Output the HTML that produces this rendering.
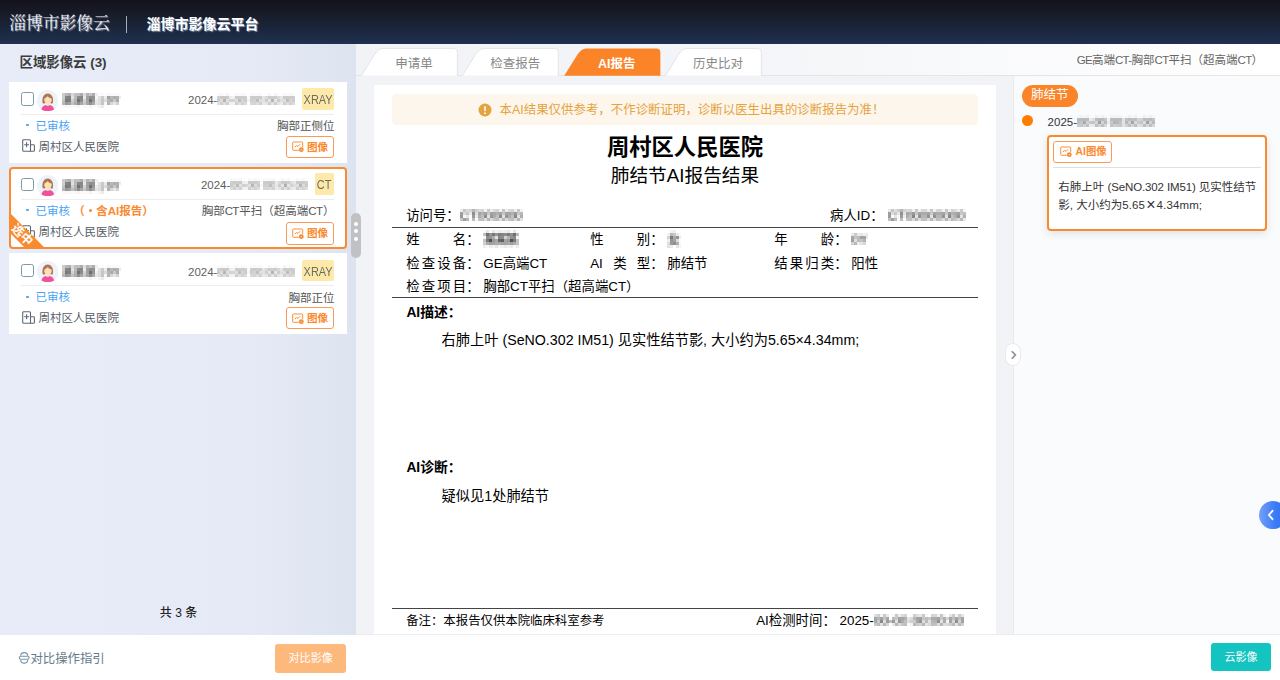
<!DOCTYPE html>
<html lang="zh-CN">
<head>
<meta charset="utf-8">
<title>淄博市影像云平台</title>
<style>
*{box-sizing:border-box;margin:0;padding:0}
html,body{width:1280px;height:680px;overflow:hidden;background:#fff}
body{font-family:"Liberation Sans","Noto Sans CJK SC",sans-serif;font-size:12px;color:#333;position:relative}
.a{position:absolute;white-space:nowrap}
.blur{filter:url(#px);white-space:nowrap;display:inline-block}
.nm .blur{font-weight:bold;color:#484848}
/* header */
#hdr{position:absolute;left:0;top:0;width:1280px;height:44px;background:linear-gradient(180deg,#14121a 0%,#19202f 45%,#1f3051 100%)}
#hdr .t1{position:absolute;left:9.2px;top:12px;font-family:"Liberation Serif","Noto Serif CJK SC",serif;font-size:16.8px;line-height:24px;color:#f4f4f7;text-shadow:1px 1px 1px rgba(170,175,190,.8)}
#hdr .sep{position:absolute;left:125.9px;top:16px;width:1px;height:17px;background:#a8adb8}
#hdr .t2{position:absolute;left:146.4px;top:12.6px;font-size:14px;line-height:22px;font-weight:bold;color:#fff;text-shadow:1px 1px 1px rgba(160,170,190,.9)}
/* left */
#left{position:absolute;left:0;top:44px;width:356px;height:591px;z-index:2;background:linear-gradient(90deg,#e7ecf8 0%,#e5eaf6 70%,#dde3ef 100%)}
#left h3{position:absolute;left:19.5px;top:9px;font-size:13.4px;line-height:20px;font-weight:bold;color:#3c3c3c}
.card{position:absolute;left:9px;width:338px;height:81px;background:#fff;font-size:11.5px}
.card.sel{border:2px solid #fa8a2f;border-radius:4px;overflow:hidden;height:81.6px}
.card .in{position:absolute;left:0;top:0;width:338px;height:81px}
.card.sel .in{left:-2px;top:-1.5px}
.card.c3 .in{top:.7px}
.card.sel .hr{top:31.3px}
.card.sel .st{top:34px}
.card.sel .ex{top:34.5px}
.card.sel .cb{top:10.6px;height:13px}
.card.c3 .hr{top:31.3px}
.cb{position:absolute;left:12px;top:10.3px;width:13px;height:13.3px;border:1px solid #7d98a8;border-radius:2.5px;background:#fff}
.av{position:absolute;left:27.7px;top:7.6px;width:21.5px;height:21.5px}
.nm{position:absolute;left:53px;top:8px;line-height:21px;font-size:11.5px;font-weight:bold;color:#333}
.dt .blur{filter:url(#px);white-space:nowrap;display:inline-block}
.nm .blur{font-weight:bold;color:#484848}
.dt{position:absolute;left:179px;top:8px;line-height:21px;font-size:11.5px;color:#5e5e5e}
.tag{position:absolute;right:13px;top:6px;height:21.5px;line-height:24px;width:32.2px;text-align:center;background:#fde9a9;color:#6e6d62;border-radius:2px;font-size:12.2px;overflow:hidden}
.tag span{display:inline-block;transform:scaleX(.9);transform-origin:50% 50%;margin:0 -4px}
.tag.ct{width:19.3px}
.hr{position:absolute;left:12px;right:13px;top:32px;height:1px;background:#ededf0}
.st{position:absolute;left:26.5px;top:34.7px;line-height:18px;color:#4aa3f5;font-size:11.5px}
.st b{color:#fa8a2f}
.st i{position:absolute;left:-9.6px;top:7.2px;width:2.6px;height:2.6px;border-radius:50%;background:#4aa3f5}
.st b i{position:relative;left:0;top:0;display:inline-block;vertical-align:middle;background:none;width:11.5px;height:3px;margin-top:-2px}
.st b i:after{content:"";position:absolute;left:4.2px;top:0;width:3px;height:3px;border-radius:50%;background:#fa8a2f}
.rib{position:absolute;left:-16.7px;top:60px;width:60px;height:14px;background:#fa8a2f;transform:rotate(45deg)}
.ribt{position:absolute;left:-17.2px;top:60.3px;width:60px;height:14px;text-align:center;color:#fff;font-size:12.3px;font-weight:bold;line-height:14px;transform:rotate(45deg);white-space:nowrap}
.ex u{text-decoration:none;letter-spacing:-.65px;margin-right:.65px}
.sel .ib{top:54.4px;height:23px;line-height:21px}
.sel .ib svg{top:5px}
.sel .tag{top:5.7px}
.sel .dt{top:7.5px}
.ex{position:absolute;right:12.5px;top:35px;line-height:18px;color:#555;font-size:11.5px}
.hs{position:absolute;left:29.5px;top:55.8px;line-height:18px;color:#555c68;font-size:11.5px}
.hi{position:absolute;left:13px;top:57px;width:13px;height:13px}
.ib{position:absolute;right:12.9px;top:53.7px;width:48.6px;height:22.1px;border:1px solid #fb9a58;border-radius:3px;background:#fff;color:#fa8a2f;font-weight:bold;font-size:10.6px;line-height:20px}
.ib svg{position:absolute;left:5px;top:4.5px;width:13px;height:12px}
.ib span{position:absolute;left:20.5px;top:0}
#total{position:absolute;left:0;top:559.4px;width:357px;text-align:center;font-size:12px;line-height:20px;color:#222;font-weight:500}
#grip{position:absolute;left:351px;top:213px;width:9.5px;height:45px;border-radius:5px;background:#c1c1c5;z-index:3}
#grip i{position:absolute;left:2.7px;width:4px;height:4px;border-radius:50%;background:#fff}
/* bottom */
#bot{position:absolute;left:0;top:634.3px;width:1280px;height:46px;background:#fff;border-top:1px solid #ececf0}
#bot .g{position:absolute;left:30.4px;top:14px;line-height:20px;font-size:12.4px;color:#64798a}
#bot .b1{position:absolute;left:275.2px;top:9.2px;width:71px;height:28.5px;border-radius:3px;background:#fdb87c;color:#fff;font-size:11.1px;line-height:28.5px;text-align:center}
#bot .b2{position:absolute;left:1211px;top:7.6px;width:60px;height:28.4px;border-radius:3px;background:#14c4c0;color:#fff;font-size:11px;line-height:28.4px;text-align:center}
/* center */
#mid{position:absolute;left:356px;top:44px;width:924px;height:590px;background:#f2f3f7}
#topbar{position:absolute;left:0;top:0;width:924px;height:32px;background:linear-gradient(90deg,#f2f3f7 0%,#f4f5f8 40%,#fff 100%);border-bottom:1px solid #e3e5ea}
#topbar .ttl u{text-decoration:none;letter-spacing:-.67px}
#topbar .ttl{position:absolute;right:17px;top:5.6px;line-height:20px;font-size:11.5px;color:#666}
.tab{position:absolute;top:4px;height:28px;width:101px}
.tab svg{position:absolute;left:0;top:0}
.tab span{position:absolute;left:15px;width:76px;top:5.8px;text-align:center;line-height:20px;font-size:12.5px;color:#888}
.tab.on span{color:#fff;font-weight:bold}
#rep{position:absolute;left:18px;top:41px;width:621.7px;height:549px;background:#fff;color:#000;font-size:14px}
#rp{position:absolute;left:657px;top:32px;width:267px;height:558px;background:#fafbfd;border-left:1px solid #e9eaf0}
#rp .w{position:absolute;left:1px;top:0;width:0;height:0}

.alert{position:absolute;left:18px;top:9px;width:586px;height:30.5px;border-radius:4px;background:#fdf6ec;color:#e6a23c;font-size:12.45px;line-height:30.5px;white-space:nowrap}
.alert svg{position:absolute;left:86.200px;top:9px}
.alert span{position:absolute;left:107.500px;top:.7px}
.h1{position:absolute;left:18px;width:586px;top:48.1px;text-align:center;font-size:22.3px;font-weight:bold;line-height:30px;color:#000}
.h2{position:absolute;left:18px;width:586px;top:78px;text-align:center;font-size:18.7px;line-height:26px;color:#000}
.r{font-size:13.400px;line-height:20px;color:#000}
.lb{display:inline-block;width:60px;text-align:justify;text-align-last:justify;vertical-align:top}
.lb.fx{display:inline-flex;justify-content:space-between}
.ln{position:absolute;left:18px;width:586px;height:1px;background:#444}
.bt{font-size:13.8px;font-weight:bold;line-height:22px;color:#000}
.bd{font-size:14.22px;line-height:22px;color:#000}
.ft{font-size:12.400px;line-height:20px;color:#000}
.v{vertical-align:top}

.pill{position:absolute;left:7.100px;top:9.300px;width:55.500px;height:21.500px;border-radius:11px;background:#fb8429;color:#fff;font-size:12.500px;line-height:21.500px;text-align:center}
.dot{position:absolute;left:6.600px;top:38.900px;width:11px;height:11px;border-radius:50%;background:#ff7d00}
.tm{left:32.600px;top:36.300px;font-size:11.500px;line-height:20px;color:#333}
.rc{position:absolute;left:32.100px;top:59.200px;width:220px;height:95.500px;border:2px solid #fa8a2f;border-radius:4px;background:#fff;box-shadow:0 3px 8px rgba(0,0,0,.1)}
.aib{position:absolute;left:4px;top:4px;width:59px;height:21.500px;border:1px solid #fb9a58;border-radius:3px;color:#fa8a2f;font-weight:bold;font-size:10.4px;line-height:19.500px}
.aib svg{position:absolute;left:6px;top:4.200px;width:13px;height:12px}
.aib span{position:absolute;left:21.500px;top:0}
.rhr{position:absolute;left:4px;right:4.500px;top:29.800px;height:1px;background:#e0e0e3}
.rt{position:absolute;left:9.200px;font-size:11.500px;line-height:18px;color:#333;white-space:nowrap}
.rt u{text-decoration:none;letter-spacing:-.13px}
.rt i{font-style:normal;margin:0 1.1px;font-size:16px;line-height:0;position:relative;top:1.2px}
.rt s{text-decoration:none;letter-spacing:.12px}
.col{position:absolute;left:-10.2px;top:267.4px;width:16.6px;height:23px;border-radius:8.3px;background:#fff;border:1px solid #e9e9ef}
.col svg{position:absolute;left:4.3px;top:5.3px}
.fab{position:absolute;left:243.600px;top:424.500px;width:28px;height:28px;border-radius:14px;background:linear-gradient(90deg,#74a0f8 0%,#3a7af6 60%,#2f73f5 100%)}
.fab svg{position:absolute;left:7.500px;top:7.500px}
.gi{position:absolute;left:17.9px;top:15.9px}
</style>
</head>
<body>
<svg width="0" height="0" style="position:absolute"><defs><filter id="px" x="0" y="0" width="100%" height="100%" color-interpolation-filters="sRGB"><feGaussianBlur in="SourceGraphic" stdDeviation="0.9" result="b"/><feFlood x="1" y="1" width="1" height="1" flood-color="#000"/><feComposite width="3" height="3"/><feTile result="t"/><feComposite in="b" in2="t" operator="in"/><feMorphology operator="dilate" radius="1" result="m"/><feGaussianBlur in="m" stdDeviation=".6"/></filter></defs></svg>
<div id="hdr"><div class="t1">淄博市影像云</div><div class="sep"></div><div class="t2">淄博市影像云平台</div></div>
<div id="left"><h3>区域影像云 (3)</h3>
<div class="card" style="top:38px"><div class="in">
<div class="cb"></div>
<svg class="av" viewBox="0 0 43 43"><circle cx="21.500" cy="21.500" r="21.500" fill="#eef2fa"/><path d="M11.500 26.500c-1.200-4-1-9.500 1-13.500 1.800-4 5.500-6 9-6s7.200 2 9 6c2 4 2.200 9.500 1 13.500-2 .8-4.300 .5-5.800-.5h-8.400c-1.500 1-3.800 1.300-5.800 .5z" fill="#b4744c"/><path d="M14.500 17.500c2-1 4.800-2.800 6.500-5 2.300 2.300 5.200 4 8.500 5 .3 4.800-1.800 8.800-5 10.300v3.200h-5v-3.200c-3.200-1.500-5.300-5.500-5-10.300z" fill="#fbe0bc"/><path d="M9 39.500c0-4.800 4-8.300 9-9.300 1 1.300 2.500 1.800 3.500 1.800s2.500-.5 3.500-1.800c5 1 9 4.500 9 9.300-3.500 1.700-7.500 2.500-12.500 2.500s-9-.8-12.500-2.500z" fill="#f1519b"/></svg>
<div class="nm"><span class="blur">某某某 | 0Y</span></div>
<div class="dt">2024-<span class="blur">00-00 00:00:00</span></div>
<div class="tag"><span>XRAY</span></div>
<div class="hr"></div>
<div class="st"><i></i>已审核</div>
<div class="ex">胸部正侧位</div>
<svg class="hi" viewBox="0 0 13 13" fill="none" stroke="#5f6878" stroke-width="1.100"><path d="M8.500 12.300H1.700a1 1 0 0 1-1-1V1.700a1 1 0 0 1 1-1h5.800a1 1 0 0 1 1 1z"/><path d="M8.500 5.800h3a.9.900 0 0 1 .9.900v4.700a.9.900 0 0 1-.9.900h-3"/><path d="M4.600 3.200v5M2.200 5.700h4.800"/></svg>
<div class="hs">周村区人民医院</div>
<div class="ib"><svg viewBox="0 0 13 12" fill="none" stroke="#fa8a2f" stroke-width=".95"><path d="M6.800 9.300H1.500a.8.800 0 0 1-.8-.8V1.800a.8.800 0 0 1 .8-.8h8.400a.8.800 0 0 1 .8.800v4.400"/><path d="M2.800 6.200l1.700-1.700 1.500 .9 2.200-2.200" stroke-width="1"/><circle cx="9.300" cy="8.700" r="2.400" fill="#fa8a2f" stroke="none"/><circle cx="9.300" cy="8.700" r=".8" fill="#fff" stroke="none" opacity=".55"/></svg><span>图像</span></div>
</div></div>
<div class="card sel" style="top:123px"><div class="in">
<div class="cb"></div>
<svg class="av" viewBox="0 0 43 43"><circle cx="21.500" cy="21.500" r="21.500" fill="#eef2fa"/><path d="M11.500 26.500c-1.200-4-1-9.500 1-13.500 1.800-4 5.500-6 9-6s7.200 2 9 6c2 4 2.200 9.500 1 13.500-2 .8-4.300 .5-5.800-.5h-8.400c-1.500 1-3.800 1.300-5.800 .5z" fill="#b4744c"/><path d="M14.500 17.500c2-1 4.800-2.800 6.500-5 2.300 2.300 5.200 4 8.500 5 .3 4.800-1.800 8.800-5 10.300v3.200h-5v-3.200c-3.200-1.500-5.300-5.500-5-10.300z" fill="#fbe0bc"/><path d="M9 39.500c0-4.800 4-8.300 9-9.300 1 1.300 2.500 1.800 3.500 1.800s2.500-.5 3.500-1.800c5 1 9 4.500 9 9.300-3.500 1.700-7.500 2.500-12.500 2.500s-9-.8-12.500-2.500z" fill="#f1519b"/></svg>
<div class="nm"><span class="blur">某某某 | 0Y</span></div>
<div class="dt" style="left:191.9px">2024-<span class="blur">00-00 00:00:00</span></div>
<div class="tag ct"><span>CT</span></div>
<div class="hr"></div>
<div class="st"><i></i>已审核 <b>（<i></i>含AI报告）</b></div>
<div class="ex">胸部<u>CT</u>平扫（超高端<u>CT</u>）</div>
<svg class="hi" viewBox="0 0 13 13" fill="none" stroke="#5f6878" stroke-width="1.100"><path d="M8.500 12.300H1.700a1 1 0 0 1-1-1V1.700a1 1 0 0 1 1-1h5.800a1 1 0 0 1 1 1z"/><path d="M8.500 5.800h3a.9.900 0 0 1 .9.900v4.700a.9.900 0 0 1-.9.900h-3"/><path d="M4.600 3.200v5M2.200 5.700h4.800"/></svg>
<div class="hs">周村区人民医院</div>
<div class="ib"><svg viewBox="0 0 13 12" fill="none" stroke="#fa8a2f" stroke-width=".95"><path d="M6.800 9.300H1.500a.8.800 0 0 1-.8-.8V1.800a.8.800 0 0 1 .8-.8h8.400a.8.800 0 0 1 .8.800v4.400"/><path d="M2.800 6.200l1.700-1.700 1.500 .9 2.200-2.200" stroke-width="1"/><circle cx="9.300" cy="8.700" r="2.400" fill="#fa8a2f" stroke="none"/><circle cx="9.300" cy="8.700" r=".8" fill="#fff" stroke="none" opacity=".55"/></svg><span>图像</span></div>
<div class="rib"></div><div class="ribt">选中</div></div></div>
<div class="card c3" style="top:209px"><div class="in">
<div class="cb"></div>
<svg class="av" viewBox="0 0 43 43"><circle cx="21.500" cy="21.500" r="21.500" fill="#eef2fa"/><path d="M11.500 26.500c-1.200-4-1-9.500 1-13.500 1.800-4 5.500-6 9-6s7.200 2 9 6c2 4 2.200 9.500 1 13.500-2 .8-4.300 .5-5.800-.5h-8.400c-1.500 1-3.800 1.300-5.800 .5z" fill="#b4744c"/><path d="M14.500 17.500c2-1 4.800-2.800 6.500-5 2.300 2.300 5.200 4 8.500 5 .3 4.800-1.800 8.800-5 10.300v3.200h-5v-3.200c-3.200-1.500-5.300-5.500-5-10.300z" fill="#fbe0bc"/><path d="M9 39.500c0-4.800 4-8.300 9-9.300 1 1.300 2.500 1.800 3.500 1.800s2.500-.5 3.500-1.800c5 1 9 4.500 9 9.300-3.500 1.700-7.500 2.500-12.500 2.500s-9-.8-12.500-2.500z" fill="#f1519b"/></svg>
<div class="nm"><span class="blur">某某某 | 0Y</span></div>
<div class="dt">2024-<span class="blur">00-00 00:00:00</span></div>
<div class="tag"><span>XRAY</span></div>
<div class="hr"></div>
<div class="st"><i></i>已审核</div>
<div class="ex">胸部正位</div>
<svg class="hi" viewBox="0 0 13 13" fill="none" stroke="#5f6878" stroke-width="1.100"><path d="M8.500 12.300H1.700a1 1 0 0 1-1-1V1.700a1 1 0 0 1 1-1h5.800a1 1 0 0 1 1 1z"/><path d="M8.500 5.800h3a.9.900 0 0 1 .9.900v4.700a.9.900 0 0 1-.9.900h-3"/><path d="M4.600 3.200v5M2.200 5.700h4.800"/></svg>
<div class="hs">周村区人民医院</div>
<div class="ib"><svg viewBox="0 0 13 12" fill="none" stroke="#fa8a2f" stroke-width=".95"><path d="M6.800 9.300H1.500a.8.800 0 0 1-.8-.8V1.800a.8.800 0 0 1 .8-.8h8.400a.8.800 0 0 1 .8.800v4.400"/><path d="M2.800 6.200l1.700-1.700 1.500 .9 2.200-2.200" stroke-width="1"/><circle cx="9.300" cy="8.700" r="2.400" fill="#fa8a2f" stroke="none"/><circle cx="9.300" cy="8.700" r=".8" fill="#fff" stroke="none" opacity=".55"/></svg><span>图像</span></div>
</div></div>

<div id="total">共 3 条</div>
</div>
<div id="mid">
<div id="topbar">
<div class="tab" style="left:5px"><svg width="98" height="29" viewBox="0 0 98 29"><path d="M0.200 27.800L13.500 6.500Q17.400 .400 22 .400H92.400Q96.400 .400 96.400 4.400V27.800" fill="#fff" stroke="#e4e4e8" stroke-width="1"/></svg><span>申请单</span></div>
<div class="tab" style="left:106.3px"><svg width="98" height="29" viewBox="0 0 98 29"><path d="M0.200 27.800L13.500 6.500Q17.400 .400 22 .400H92.400Q96.400 .400 96.400 4.400V27.800" fill="#fff" stroke="#e4e4e8" stroke-width="1"/></svg><span>检查报告</span></div>
<div class="tab on" style="left:207.7px"><svg width="98" height="29" viewBox="0 0 98 29"><path d="M0.200 27.800L13.500 6.500Q17.400 .400 22 .400H92.400Q96.400 .400 96.400 4.400V27.800z" fill="#fb8429"/></svg><span>AI报告</span></div>
<div class="tab" style="left:309px"><svg width="98" height="29" viewBox="0 0 98 29"><path d="M0.200 27.800L13.500 6.500Q17.400 .400 22 .400H92.400Q96.400 .400 96.400 4.400V27.800" fill="#fff" stroke="#e4e4e8" stroke-width="1"/></svg><span>历史比对</span></div>

<div class="ttl"><u>GE</u>高端<u>CT-</u>胸部<u>CT</u>平扫（超高端<u>CT</u>）</div>
</div>
<div id="rep">
<div class="alert"><svg width="14" height="14" viewBox="0 0 14 14"><circle cx="7" cy="7" r="6.500" fill="#e6a23c"/><rect x="6.200" y="3.200" width="1.600" height="5" rx=".6" fill="#fff"/><circle cx="7" cy="10.200" r=".95" fill="#fff"/></svg><span>本AI结果仅供参考，不作诊断证明，诊断以医生出具的诊断报告为准！</span></div>
<div class="h1">周村区人民医院</div>
<div class="h2">肺结节AI报告结果</div>
<div class="a r" style="left:32.200px;top:120.9px">访问号：<span class="blur v">CT000000</span></div>
<div class="a r" style="left:456px;top:120.9px">病人ID：<span class="blur v" style="margin-left:4px">CT00000000</span></div>
<div class="ln" style="top:141.800px"></div>
<div class="a r" style="left:32.200px;top:145.1px"><span class="lb">姓名</span>： <span class="blur v" style="letter-spacing:-2.3px">某某某</span></div>
<div class="a r" style="left:216.200px;top:145.1px"><span class="lb">性别</span>： <span class="blur v">女</span></div>
<div class="a r" style="left:400.200px;top:145.1px"><span class="lb">年龄</span>： <span class="blur v">0Y</span></div>
<div class="a r" style="left:32.200px;top:168.5px"><span class="lb">检查设备</span>： GE高端CT</div>
<div class="a r" style="left:216.200px;top:168.5px"><span class="lb fx"><span>AI</span><span>类</span><span>型</span></span>： 肺结节</div>
<div class="a r" style="left:400.200px;top:168.5px"><span class="lb">结果归类</span>： 阳性</div>
<div class="a r" style="left:32.200px;top:191.8px"><span class="lb">检查项目</span>： 胸部CT平扫（超高端CT）</div>
<div class="ln" style="top:212px"></div>
<div class="a bt" style="left:32.400px;top:216.5px">AI描述：</div>
<div class="a bd" style="left:67.600px;top:244px">右肺上叶 (SeNO.302 IM51) 见实性结节影, 大小约为5.65×4.34mm;</div>
<div class="a bt" style="left:32.400px;top:372px">AI诊断：</div>
<div class="a bd" style="left:67.600px;top:399.500px">疑似见1处肺结节</div>
<div class="ln" style="top:522.500px"></div>
<div class="a ft" style="left:32.200px;top:525.6px">备注：本报告仅供本院临床科室参考</div>
<div class="a ft" style="left:382.2px;top:525.7px;font-size:13.4px">AI检测时间： 2025-<span class="blur">00-00 00:00:00</span></div>

</div>
<div id="rp"><div class="w">
<div class="pill">肺结节</div>
<div class="dot"></div>
<div class="a tm">2025-<span class="blur">00-00 00:00:00</span></div>
<div class="rc">
<div class="aib"><svg viewBox="0 0 13 12" fill="none" stroke="#fa8a2f" stroke-width=".95"><path d="M6.800 9.300H1.500a.8.800 0 0 1-.8-.8V1.800a.8.800 0 0 1 .8-.8h8.400a.8.800 0 0 1 .8.800v4.400"/><path d="M2.800 6.200l1.700-1.700 1.500 .9 2.200-2.200" stroke-width="1"/><circle cx="9.300" cy="8.700" r="2.400" fill="#fa8a2f" stroke="none"/><circle cx="9.300" cy="8.700" r=".8" fill="#fff" stroke="none" opacity=".55"/></svg><span>AI图像</span></div>
<div class="rhr"></div>
<div class="rt" style="top:41px">右肺上叶 <u>(SeNO.302 IM51)</u> 见实性结节</div>
<div class="rt" style="top:58.600px">影, 大小约为<s>5.65</s><i>×</i><s>4.34mm;</s></div>
</div>
<div class="col"><svg width="8" height="10" viewBox="0 0 8 10"><path d="M2.300 1.800L5.400 5 2.300 8.200" fill="none" stroke="#8c8c96" stroke-width="1.600" stroke-linecap="square"/></svg></div>
<div class="fab"><svg width="10" height="14" viewBox="0 0 10 14"><path d="M6.500 2.800L2.800 7 6.500 11.200" fill="none" stroke="#fff" stroke-width="1.800" stroke-linecap="round" stroke-linejoin="round"/></svg></div>

</div></div>
</div>
<div id="grip"><i style="top:8.5px"></i><i style="top:16px"></i><i style="top:23.5px"></i></div>
<div id="bot">
<svg class="gi" width="13" height="13" viewBox="0 0 13 13" fill="none" stroke="#7b93a4" stroke-width="1.100"><path d="M2.700 4.700a3.500 3.100 0 0 1 7 0"/><rect x="1.300" y="5.300" width="9.800" height="3" rx="1.500"/><path d="M2.700 9a3.500 3.100 0 0 0 7 0"/></svg>

<div class="g">对比操作指引</div>
<div class="b1">对比影像</div>
<div class="b2">云影像</div>
</div>
</body>
</html>
